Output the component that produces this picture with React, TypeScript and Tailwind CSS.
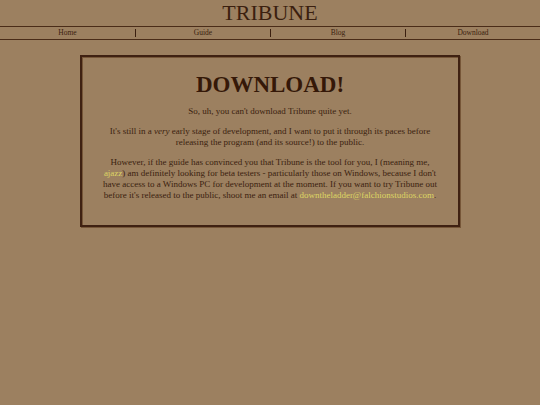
export default function App() {
  return (
    <div className="min-h-[405px] w-full bg-[#9c8060] text-[#3b1f0f]" style={{ fontFamily: '"Liberation Serif", "Times New Roman", serif' }}>
      <div className="text-center text-[22px] leading-[25px]">TRIBUNE</div>
      <nav className="mt-[1px] grid grid-cols-4 border-y border-[#4a2c18] py-[2px] text-[7.5px] leading-[8px]">
        <div className="text-center">Home</div>
        <div className="border-l border-[#3b1f0f] text-center">Guide</div>
        <div className="border-l border-[#3b1f0f] text-center">Blog</div>
        <div className="border-l border-[#3b1f0f] text-center">Download</div>
      </nav>
      <div className="mx-auto mt-[15px] w-[380px] border-2 border-[#3f2112] px-[18px] pt-[14px] pb-[24px] text-center text-[9px] leading-[11px] shadow-[inset_1px_1px_0_#765638,1px_1px_0_#765638]">
        <h1 className="text-[23px] font-bold leading-[27px] text-[#351808]">DOWNLOAD!</h1>
        <p className="mt-[8px]">So, uh, you can't download Tribune quite yet.</p>
        <p className="mt-[9px]">
          It's still in a <i>very</i> early stage of development, and I want to put it through its paces before releasing the program (and its source!) to the public.
        </p>
        <p className="mt-[9px]">
          However, if the guide has convinced you that Tribune is the tool for you, I (meaning me, <span className="text-[#dcd664]">ajazz</span>) am definitely looking for beta testers - particularly those on Windows, because I don't have access to a Windows PC for development at the moment. If you want to try Tribune out before it's released to the public, shoot me an email at <span className="text-[#dcd664]">downtheladder@falchionstudios.com</span>.
        </p>
      </div>
    </div>
  );
}
